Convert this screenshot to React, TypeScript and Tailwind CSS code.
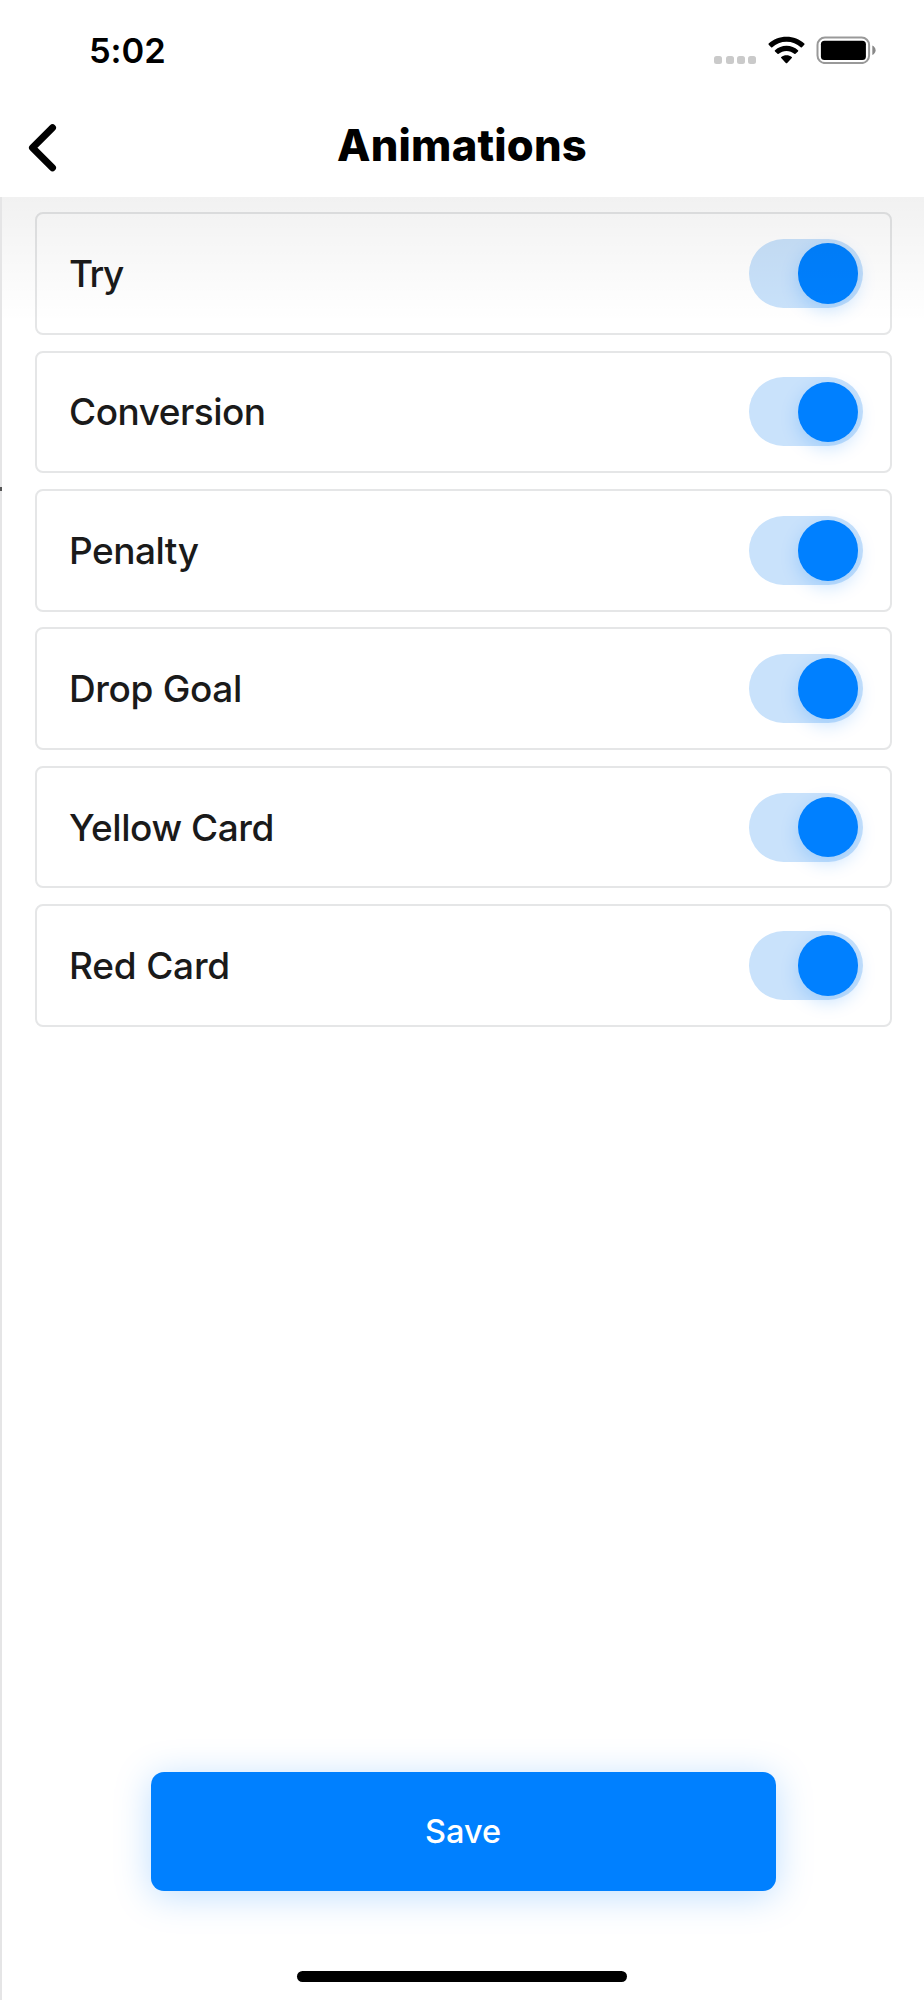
const items = [
  { name: "Try", tracking: "tracking-[-1.5px]" },
  { name: "Conversion", tracking: "tracking-[-0.5px]" },
  { name: "Penalty", tracking: "tracking-[-0.5px]" },
  { name: "Drop Goal", tracking: "tracking-[-0.35px]" },
  { name: "Yellow Card", tracking: "tracking-[-0.45px]" },
  { name: "Red Card", tracking: "tracking-[-0.2px]" },
];

function Toggle() {
  return (
    <button
      type="button"
      role="switch"
      aria-checked="true"
      className="flex h-[69px] w-[114px] items-center justify-end rounded-full bg-[#c9e2fb] pr-[4.5px]"
    >
      <span className="size-[60.5px] rounded-full bg-[#0080ff] shadow-[0_6px_18px_rgba(0,128,255,0.22)]" />
    </button>
  );
}

function StatusBar() {
  return (
    <div className="flex h-[100px] items-start justify-between pl-[89px] pr-[48px]">
      <span className="mt-[26px] text-[34.5px] leading-[50px] font-semibold tracking-[-0.1px] text-black">5:02</span>
      <div className="mt-[36px] flex h-[28px]">
        <div className="mr-[11.5px] flex items-end gap-[3.2px]">
          <i className="size-[8px] rounded-[2.5px] bg-[#cacaca]" />
          <i className="size-[8px] rounded-[2.5px] bg-[#cacaca]" />
          <i className="size-[8px] rounded-[2.5px] bg-[#cacaca]" />
          <i className="size-[8px] rounded-[2.5px] bg-[#cacaca]" />
        </div>
        <svg className="mr-[11.5px] h-[28px] w-[37px]" viewBox="0 0 37 28">
          <path d="M18.5.7C25.400.7 31.700 3.300 36.300 7.600Q36.900 8.200 36.300 8.800L33.900 11.200Q33.300 11.700 32.700 11.200C29 7.700 24 5.700 18.500 5.700S8 7.700 4.300 11.200Q3.700 11.700 3.100 11.200L.7 8.800Q.1 8.200.7 7.600C5.300 3.300 11.600.7 18.500.7Z" />
          <path d="M18.500 9.800C22.900 9.800 26.900 11.400 30 14.200Q30.600 14.800 30 15.400L27.500 17.800Q26.900 18.300 26.300 17.800C24.200 16 21.500 14.900 18.500 14.900S12.800 16 10.700 17.800Q10.100 18.300 9.500 17.800L7 15.400Q6.400 14.800 7 14.200C10.100 11.400 14.100 9.800 18.500 9.800Z" />
          <path d="M18.500 19.200C20.500 19.200 22.300 19.800 23.700 20.900Q24.400 21.500 23.800 22.100L19.200 26.900Q18.500 27.500 17.800 26.900L13.200 22.100Q12.600 21.500 13.300 20.900C14.700 19.800 16.500 19.200 18.500 19.200Z" />
        </svg>
        <svg className="h-[28px] w-[60px]" viewBox="0 0 60 28">
          <rect x="1.500" y="1.500" width="51.600" height="25.600" rx="7.500" fill="none" stroke="#999" strokeWidth="2" />
          <rect x="4.900" y="4.700" width="45" height="19.400" rx="3.600" />
          <path d="M56.300 9.500C58.300 10.300 59.600 12.300 59.600 14.300S58.300 18.300 56.300 19.100Z" fill="#888" />
        </svg>
      </div>
    </div>
  );
}

export default function App() {
  return (
    <div className="flex h-[2000px] w-[924px] flex-col bg-white font-[Inter,'Liberation_Sans',sans-serif]">
      <StatusBar />
      <header className="grid h-[97px] grid-cols-[72px_1fr_72px]">
        <button type="button" aria-label="Back" className="flex items-start pt-[20px] pl-[26px]">
          <svg className="h-[56px] w-[36px]" viewBox="0 0 36 56" fill="none">
            <path d="M26.500 7.700L6.500 27.700L26.500 47.700" stroke="#000" strokeWidth="7" strokeLinecap="round" strokeLinejoin="round" />
          </svg>
        </button>
        <h1 className="mt-[19px] text-center text-[43.5px] leading-[52px] font-extrabold tracking-[0.2px] text-black">Animations</h1>
      </header>
      <main className="relative flex flex-1 flex-col items-center border-l-2 border-[#e5e5e6]">
        <div className="pointer-events-none absolute inset-x-0 top-0 h-[125px] bg-linear-to-b from-black/[0.055] to-transparent" />
        <i className="absolute top-[290px] -left-[2px] h-[4px] w-[2px] bg-[#555]" />
        <ul className="flex w-full flex-col gap-[15.900px] pt-[15.300px] pr-[32.500px] pl-[33px]">
          {items.map(({ name, tracking }) => (
            <li
              key={name}
              className="flex h-[122.500px] items-center justify-between rounded-[8px] border-2 border-[#e5e6e7] pr-[27px] pl-[32px]"
            >
              <span className={`pt-[1px] text-[37px] leading-[44px] font-medium text-[#1a1a1a] ${tracking}`}>{name}</span>
              <Toggle />
            </li>
          ))}
        </ul>
        <button
          type="button"
          className="mt-auto h-[118.500px] w-[625px] rounded-[13px] bg-[#0080ff] pt-[2px] text-[32.500px] font-medium text-white shadow-[0_5px_36px_rgba(0,128,255,0.25)]"
        >
          Save
        </button>
        <div className="mt-[80.500px] mr-[2px] mb-[18px] h-[11px] w-[330px] shrink-0 rounded-full bg-black" />
      </main>
    </div>
  );
}
